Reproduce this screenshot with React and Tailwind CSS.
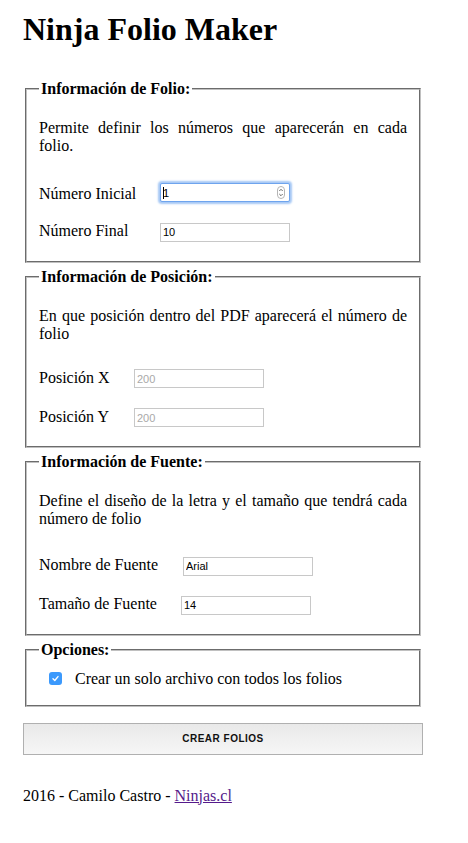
import { useState } from 'react'

function Box({ title, className, children }) {
  return (
    <fieldset className={`mx-[2px] border-2 border-[#c0c0c0] [--tw-border-style:groove] px-3 pt-[5px] ${className}`}>
      <legend className="px-[2px] font-bold">{title}</legend>
      {children}
    </fieldset>
  )
}

function Field({ label, w, children }) {
  return (
    <div className="flex items-baseline">
      <span className={`${w} shrink-0`}>{label}</span>
      {children}
    </div>
  )
}

const inputCls = "h-[19px] w-[130px] border border-[#c8c8c8] bg-white px-[2px] text-[11px] font-['Liberation_Sans',Arial,sans-serif] text-black outline-none placeholder:text-[#a9a9a9]"

function Spinner() {
  return (
    <svg width="8" height="13" viewBox="0 0 8 13" className="shrink-0">
      <rect x="0.5" y="0.5" width="7" height="12" rx="3.5" fill="#fff" stroke="#b5b5b5" />
      <path d="M2.3 5 L4 3.3 L5.7 5" fill="none" stroke="#555" strokeWidth="0.9" />
      <path d="M2.3 8 L4 9.7 L5.7 8" fill="none" stroke="#555" strokeWidth="0.9" />
    </svg>
  )
}

export default function App() {
  const [single, setSingle] = useState(true)

  return (
    <div className="min-h-screen bg-white px-[23px] font-['Liberation_Serif',serif] text-base leading-[18px] text-black">
      <div className="w-[400px]">
        <h1 className="mt-[11px] text-[32px] font-bold leading-[37px]">Ninja Folio Maker</h1>

        <form onSubmit={(e) => e.preventDefault()}>
          <Box title="Información de Folio:" className="mt-[32px] pb-[19px]">
            <p className="mt-4 text-justify">Permite definir los números que aparecerán en cada folio.</p>
            <div className="mt-[28px] flex flex-col gap-[19.5px]">
              <Field label="Número Inicial" w="w-[121px]">
                <div className="flex h-[19px] w-[130px] items-center rounded-[2px] border border-[#6ea4ee] bg-white pl-[2px] pr-[4px] font-['Liberation_Sans',Arial,sans-serif] text-[11px] shadow-[0_0_2px_2px_#a6c8f5]">
                  <span className="mr-[-1px] h-[12px] w-px bg-black"></span>
                  <span className="flex-1">1</span>
                  <Spinner />
                </div>
              </Field>
              <Field label="Número Final" w="w-[121px]">
                <input readOnly value="10" className={inputCls} />
              </Field>
            </div>
          </Box>

          <Box title="Información de Posición:" className="mt-[5px] pb-[19px]">
            <p className="mt-4 text-justify">En que posición dentro del PDF aparecerá el número de folio</p>
            <div className="mt-[26px] flex flex-col gap-[19.5px]">
              <Field label="Posición X" w="w-[95px]">
                <input readOnly placeholder="200" className={inputCls} />
              </Field>
              <Field label="Posición Y" w="w-[95px]">
                <input readOnly placeholder="200" className={inputCls} />
              </Field>
            </div>
          </Box>

          <Box title="Información de Fuente:" className="mt-[5px] pb-[19px]">
            <p className="mt-4 text-justify">Define el diseño de la letra y el tamaño que tendrá cada número de folio</p>
            <div className="mt-[28px] flex flex-col gap-[19.5px]">
              <Field label="Nombre de Fuente" w="w-[144px]">
                <input readOnly value="Arial" className={inputCls} />
              </Field>
              <Field label="Tamaño de Fuente" w="w-[142px]">
                <input readOnly value="14" className={inputCls} />
              </Field>
            </div>
          </Box>

          <Box title="Opciones:" className="mt-[5px] pb-[17px]">
            <label className="mt-[6px] flex items-center cursor-pointer" onClick={() => setSingle(!single)}>
              <span className={`ml-[10px] mr-[13px] flex h-[13px] w-[13px] items-center justify-center rounded-[3px] ${single ? 'bg-[#3b99fc]' : 'border border-[#999] bg-white'}`}>
                {single && (
                  <svg width="9" height="9" viewBox="0 0 9 9">
                    <path d="M2 4.8 L3.8 6.5 L7 2.6" fill="none" stroke="#fff" strokeWidth="1.4" strokeLinecap="round" strokeLinejoin="round" />
                  </svg>
                )}
              </span>
              <span>Crear un solo archivo con todos los folios</span>
            </label>
          </Box>

          <button type="submit" className="mt-4 flex h-[32px] w-[400px] items-center justify-center border border-[#b0b0b0] bg-linear-to-b from-[#e9e9e9] to-[#f6f6f6] font-['Liberation_Sans',Arial,sans-serif] text-[10px] font-bold tracking-[0.5px] text-[#111]">
            CREAR FOLIOS
          </button>
        </form>

        <p className="mt-[32px]">
          2016 - Camilo Castro - <a href="#" className="text-[#551a8b] underline">Ninjas.cl</a>
        </p>
      </div>
    </div>
  )
}
